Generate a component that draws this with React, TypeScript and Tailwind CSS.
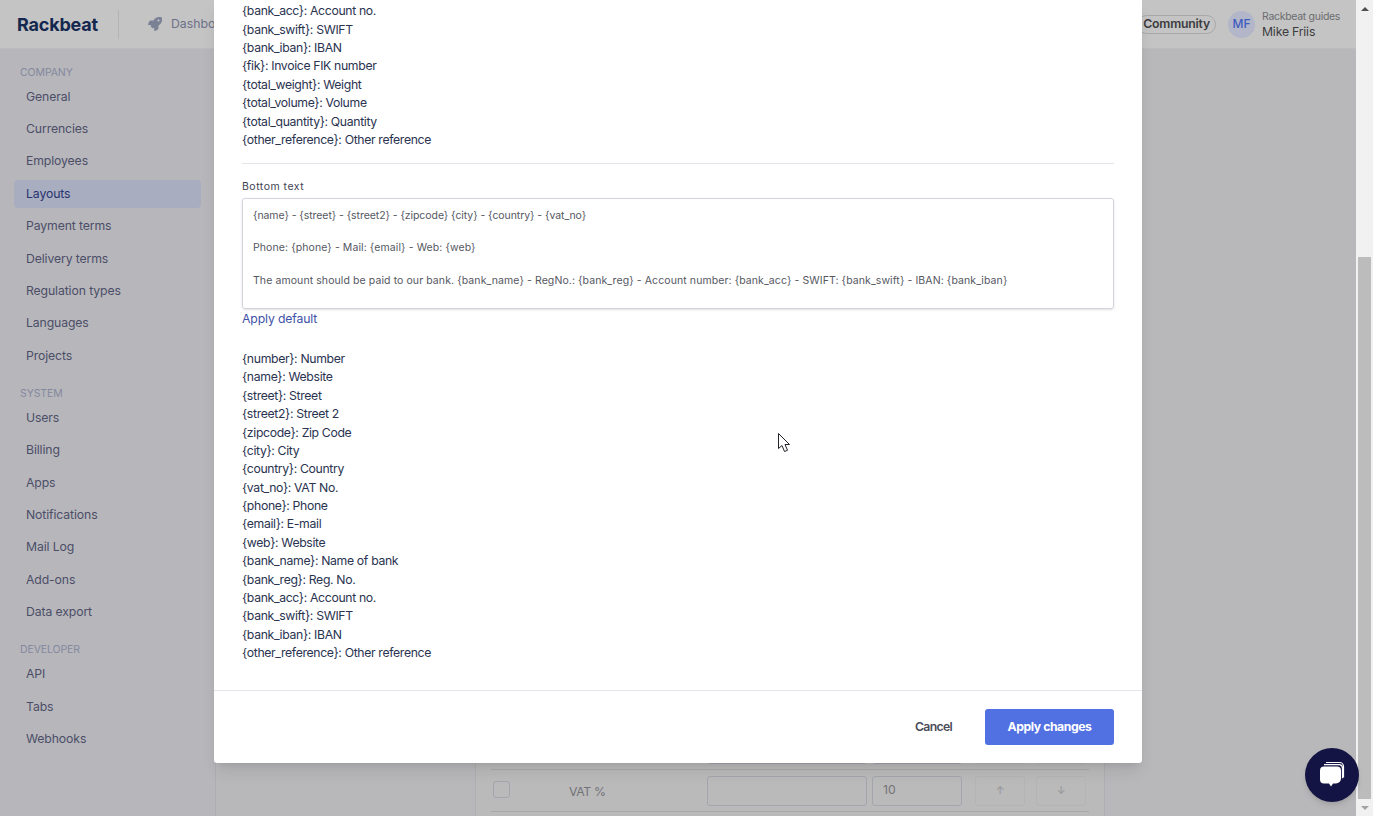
import { FaRocket } from "react-icons/fa";

const font = { fontFamily: "Inter, 'Liberation Sans', sans-serif" };

const companyLinks = ["General", "Currencies", "Employees", "Layouts", "Payment terms", "Delivery terms", "Regulation types", "Languages", "Projects"];
const systemLinks = ["Users", "Billing", "Apps", "Notifications", "Mail Log", "Add-ons", "Data export"];
const developerLinks = ["API", "Tabs", "Webhooks"];

const topVars = [
  "{bank_acc}: Account no.",
  "{bank_swift}: SWIFT",
  "{bank_iban}: IBAN",
  "{fik}: Invoice FIK number",
  "{total_weight}: Weight",
  "{total_volume}: Volume",
  "{total_quantity}: Quantity",
  "{other_reference}: Other reference",
];

const bottomVars = [
  "{number}: Number",
  "{name}: Website",
  "{street}: Street",
  "{street2}: Street 2",
  "{zipcode}: Zip Code",
  "{city}: City",
  "{country}: Country",
  "{vat_no}: VAT No.",
  "{phone}: Phone",
  "{email}: E-mail",
  "{web}: Website",
  "{bank_name}: Name of bank",
  "{bank_reg}: Reg. No.",
  "{bank_acc}: Account no.",
  "{bank_swift}: SWIFT",
  "{bank_iban}: IBAN",
  "{other_reference}: Other reference",
];

function NavSection({ title, links }: { title: string; links: string[] }) {
  return (
    <div className="mb-[13.5px]">
      <div className="pl-5 text-[10.5px] leading-[20.1px] uppercase tracking-[-0.1px] text-[#85889f]">{title}</div>
      {links.map((link) => (
        <div
          key={link}
          className={
            link === "Layouts"
              ? "mx-[14px] pl-3 h-[28.4px] mb-1 flex items-center rounded text-[12.25px] tracking-[-0.12px] bg-[#a9adc0] text-[#283470]"
              : "mx-[14px] pl-3 h-[28.4px] mb-1 flex items-center rounded text-[12.25px] tracking-[-0.12px] text-[#4c4e68]"
          }
        >
          {link}
        </div>
      ))}
    </div>
  );
}

function VarList({ items }: { items: string[] }) {
  return (
    <div className="text-[12.25px] leading-[18.375px] tracking-[-0.35px] text-[#2a3350]">
      {items.map((item, i) => (
        <div key={i}>{item}</div>
      ))}
    </div>
  );
}

function TableRow({ label, value }: { label: string; value: string }) {
  return (
    <div className="h-[42px] shrink-0 flex items-center border-b border-[#a9a9ad]">
      <div className="ml-[2px] mb-[3px] w-[17px] h-[17px] rounded-[3px] border border-[#a4a6ae]" />
      <div className="ml-[59px] mt-[3px] w-[138px] text-[12.25px] tracking-[-0.35px] text-[#737377]">{label}</div>
      <div className="w-[160px] h-[30px] rounded-[3px] border border-[#a4a6ae]" />
      <div className="ml-[5px] w-[90px] h-[30px] pl-[10px] flex items-center rounded-[3px] border border-[#a4a6ae] text-[12.25px] text-[#737377]">{value}</div>
      <div className="ml-[13px] w-[50px] h-[30px] flex items-center justify-center rounded-[3px] border border-[#b4b4b7] text-[11px] text-[#949498]">↑</div>
      <div className="ml-[11px] w-[50px] h-[30px] flex items-center justify-center rounded-[3px] border border-[#b4b4b7] text-[11px] text-[#949498]">↓</div>
    </div>
  );
}

function ChatBubbleIcon() {
  return (
    <svg width="30" height="30" viewBox="0 0 30 30">
      <path d="M9 2.5h13.5a4 4 0 0 1 4 4v11" fill="none" stroke="#fff" strokeWidth="1.2" />
      <path d="M7 4.7h15.5a3.5 3.5 0 0 1 3 3.5v10" fill="none" stroke="#fff" strokeWidth="1.2" />
      <path d="M7 6.5h13a4 4 0 0 1 4 4v8a5 5 0 0 1-5 5h-3l-2 3-2-3H7a4 4 0 0 1-4-4v-9a4 4 0 0 1 4-4z" fill="#fff" />
    </svg>
  );
}

export default function App() {
  return (
    <div className="relative h-[816px] w-[1373px] overflow-hidden flex bg-white" style={font}>
      <div className="relative w-[1356px] h-full flex flex-col bg-[#b8b8ba]">
        <header className="h-[49px] shrink-0 flex items-center bg-[#c4c4c4] border-b border-[#bcbcbe]">
          <div className="w-[118px] pl-[17px] text-[18px] font-bold tracking-[-0.2px] text-[#14274e]">Rackbeat</div>
          <div className="w-px h-[29px] bg-[#b4b4b6]" />
          <div className="ml-[29px] flex items-center gap-[9px] text-[12.25px] text-[#6c7188]">
            <FaRocket className="w-[14px] h-[14px] text-[#7b8195]" />
            Dashboard
          </div>
          <div className="ml-auto flex items-center">
            <div className="h-[19px] px-[5px] mr-[12px] flex items-center rounded-full border border-[#a8a8a8] text-[12.25px] font-semibold tracking-[-0.2px] text-[#3c3c40]">
              Community
            </div>
            <div className="w-[27px] h-[27px] mr-[7px] rounded-full bg-[#b2b6c8] flex items-center justify-center text-[12px] font-medium text-[#3f5cc0]">
              MF
            </div>
            <div className="w-[94px] mt-[3px] flex flex-col">
              <span className="text-[10.5px] leading-[13px] tracking-[-0.3px] text-[#6c6c70]">Rackbeat guides</span>
              <span className="text-[12.25px] leading-[18px] tracking-[-0.2px] text-[#3c3c40]">Mike Friis</span>
            </div>
          </div>
        </header>
        <div className="flex flex-1 min-h-0">
          <aside className="w-[216px] shrink-0 pt-[13.6px] border-r border-[#aeaeb2] bg-[#b7b7bb]">
            <NavSection title="Company" links={companyLinks} />
            <NavSection title="System" links={systemLinks} />
            <NavSection title="Developer" links={developerLinks} />
          </aside>
          <main className="flex-1 flex flex-col justify-end pl-[259px] pr-[251px]">
            <div className="h-[767px] w-full border border-[#aeaeb2] border-b-0 bg-[#bababb] px-[15px] flex flex-col justify-end">
              <TableRow label="" value="" />
              <TableRow label="VAT %" value="10" />
              <div className="h-[4px] shrink-0" />
            </div>
          </main>
        </div>

        {/* modal sits over the dimmed page */}
        <div className="absolute left-[214px] top-0 w-[928px] h-[763px] flex flex-col bg-white shadow-lg rounded-b-[3px]">
          <div className="flex-1 min-h-0 overflow-hidden flex flex-col justify-end px-[28px]">
            <VarList items={topVars} />
            <div className="mt-[14px] mb-[14px] h-px bg-[#e4e5ea]" />
            <label className="pt-[1px] text-[10.5px] leading-[16px] mb-[3px] tracking-[0.5px] text-[#3f4254]">Bottom text</label>
            <div className="h-[111px] rounded-[3px] border border-[#d3d5de] pl-[10px] pt-[8.5px] text-[10.5px] leading-[16.3px] text-[#55575f] shadow-sm">
              <div className="mb-[16px] tracking-[-0.07px]">{"{name} - {street} - {street2} - {zipcode} {city} - {country} - {vat_no}"}</div>
              <div className="mb-[16.5px] tracking-[0.09px]">{"Phone: {phone} - Mail: {email} - Web: {web}"}</div>
              <div className="tracking-[0.09px]">{"The amount should be paid to our bank. {bank_name} - RegNo.: {bank_reg} - Account number: {bank_acc} - SWIFT: {bank_swift} - IBAN: {bank_iban}"}</div>
            </div>
            <div className="mt-[1px] mb-[21.4px] text-[12.25px] leading-[18.375px] tracking-[-0.15px] text-[#3e52a8]">Apply default</div>
            <VarList items={bottomVars} />
            <div className="h-[27.6px] shrink-0" />
          </div>
          <footer className="h-[73px] shrink-0 flex items-center justify-end pr-[28px] border-t border-[#e4e5ea]">
            <button className="mr-[33px] text-[12.25px] font-semibold tracking-[-0.7px] text-[#4a4c58]">Cancel</button>
            <button className="w-[129px] h-[36px] rounded-[3px] bg-[#5170e2] text-[12.25px] font-bold tracking-[-0.45px] text-white">Apply changes</button>
          </footer>
        </div>

        <div className="absolute left-[1305px] top-[748px] w-[54px] h-[54px] rounded-full bg-[#141444] shadow-md flex items-center justify-center">
          <ChatBubbleIcon />
        </div>
      </div>

      {/* page scrollbar */}
      <div className="w-[17px] h-full flex flex-col bg-[#f1f1f1]">
        <div className="h-[17px] flex items-center justify-center">
          <div className="w-0 h-0 border-x-[4px] border-x-transparent border-b-[4px] border-b-[#505050]" />
        </div>
        <div className="mt-[240px] mx-[2px] h-[542px] bg-[#bcbcbc]" />
        <div className="h-[17px] flex items-center justify-center">
          <div className="w-0 h-0 border-x-[4px] border-x-transparent border-t-[4px] border-t-[#a3a3a3]" />
        </div>
      </div>

      {/* mouse pointer from the capture */}
      <svg className="absolute left-[778px] top-[433px]" width="13" height="20" viewBox="0 0 13 20">
        <path d="M0.5 0.5v15l3.5-3 2.5 6 3-1.2-2.5-5.8h4.5z" fill="#fff" stroke="#22222a" strokeWidth="1" />
      </svg>
    </div>
  );
}
